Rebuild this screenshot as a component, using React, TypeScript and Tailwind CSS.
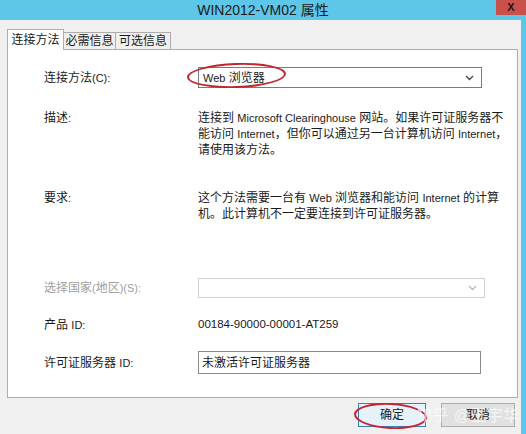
const label = "w-[190px] shrink-0 pl-[36px] whitespace-nowrap";

// Latin runs render narrower than the CJK glyphs in the original dialog font
function L({ children }: { children: React.ReactNode }) {
  return <span className="text-[11px]">{children}</span>;
}

function Chevron({ muted }: { muted?: boolean }) {
  return (
    <svg width="9" height="6" viewBox="0 0 9 6" className="shrink-0">
      <path d="M1 1l3.5 3.5L8 1" fill="none" stroke={muted ? "#b8b8b8" : "#444"} strokeWidth="1.3" />
    </svg>
  );
}

export default function App() {
  return (
    <div
      className="relative w-[526px] h-[434px] overflow-hidden bg-[#5ec6e8] text-[12px] text-[#1a1a1a]"
      style={{ fontFamily: '"Liberation Sans", "Noto Sans CJK SC", sans-serif' }}
    >
      {/* title bar */}
      <div className="relative h-[20px] flex items-center justify-center">
        <span className="text-[14px] text-[#1b1b1b] leading-none">WIN2012-VM02 属性</span>
        <div className="absolute right-0 top-0 w-[30px] h-[15px] bg-[#c8524b] flex items-center justify-center text-[11px] font-bold text-[#2a1010]">
          X
        </div>
      </div>

      {/* client area */}
      <div className="mr-[5px] h-[414px] bg-[#f0f0f0] pl-[7px] pr-[3px] pt-[9px]">
        {/* tabs */}
        <div className="flex items-end h-[20px] text-[12px]">
          <div className="relative z-10 h-[21px] w-[57px] -mb-px bg-white border border-b-0 border-[#adadad] flex items-center justify-center">
            连接方法
          </div>
          <div className="h-[17px] w-[52px] border border-l-0 border-b-0 border-[#adadad] bg-[#f0f0f0] flex items-center justify-center">
            必需信息
          </div>
          <div className="h-[17px] w-[55px] border border-l-0 border-b-0 border-[#adadad] bg-[#f0f0f0] flex items-center justify-center">
            可选信息
          </div>
        </div>

        {/* panel */}
        <div className="w-[511px] h-[349px] bg-white border border-[#adadad] pt-[17px]">
          <div className="flex items-center h-[21px]">
            <div className={label}>
              连接方法<L>(C):</L>
            </div>
            <div className="w-[284px] h-[21px] border border-[#7a7a7a] flex items-center justify-between pl-[4px] pr-[7px]">
              <span>
                <L>Web</L> 浏览器
              </span>
              <Chevron />
            </div>
          </div>

          <div className="flex mt-[22px] leading-[16px]">
            <div className={label}>
              描述<L>:</L>
            </div>
            <div className="whitespace-nowrap">
              连接到 <L>Microsoft Clearinghouse</L> 网站。如果许可证服务器不
              <br />
              能访问 <L>Internet</L>，但你可以通过另一台计算机访问 <L>Internet</L>，
              <br />
              请使用该方法。
            </div>
          </div>

          <div className="flex mt-[32px] leading-[16px]">
            <div className={label}>
              要求<L>:</L>
            </div>
            <div className="whitespace-nowrap">
              这个方法需要一台有 <L>Web</L> 浏览器和能访问 <L>Internet</L> 的计算
              <br />
              机。此计算机不一定要连接到许可证服务器。
            </div>
          </div>

          <div className="flex items-center mt-[56px] h-[20px]">
            <div className={`${label} text-[#a0a0a0]`}>
              选择国家<L>(</L>地区<L>)(S):</L>
            </div>
            <div className="w-[287px] h-[20px] border border-[#cfcfcf] flex items-center justify-end pr-[7px]">
              <Chevron muted />
            </div>
          </div>

          <div className="flex items-center mt-[19px] h-[16px]">
            <div className={label}>
              产品 <L>ID:</L>
            </div>
            <div className="text-[11.5px]">00184-90000-00001-AT259</div>
          </div>

          <div className="flex items-center mt-[18px] h-[23px]">
            <div className={label}>
              许可证服务器 <L>ID:</L>
            </div>
            <div className="w-[283px] h-[23px] border border-[#8a8a8a] flex items-center pl-[3px]">
              未激活许可证服务器
            </div>
          </div>
        </div>

        {/* buttons */}
        <div className="flex justify-end gap-[15px] mt-[5px] pr-[3px]">
          <div className="w-[68px] h-[24px] border border-[#3c7fb1] bg-[#e5f1fb] flex items-center justify-center">
            确定
          </div>
          <div className="w-[74px] h-[24px] border border-[#adadad] bg-[#e1e1e1] flex items-center justify-center">
            取消
          </div>
        </div>
      </div>

      {/* hand-drawn highlights */}
      <div className="absolute left-[187px] top-[63px] w-[99px] h-[25px] rounded-[50%] border-2 border-[#c4262e] -rotate-2" />
      <div className="absolute left-[354px] top-[403px] w-[73px] h-[26px] rounded-[50%] border-[2.5px] border-[#c4262e] rotate-3" />

      {/* watermark */}
      <div className="absolute left-[416px] top-[404px] text-[16px] text-white/70 tracking-wide pointer-events-none">
        知乎 @王宇华
      </div>
    </div>
  );
}
